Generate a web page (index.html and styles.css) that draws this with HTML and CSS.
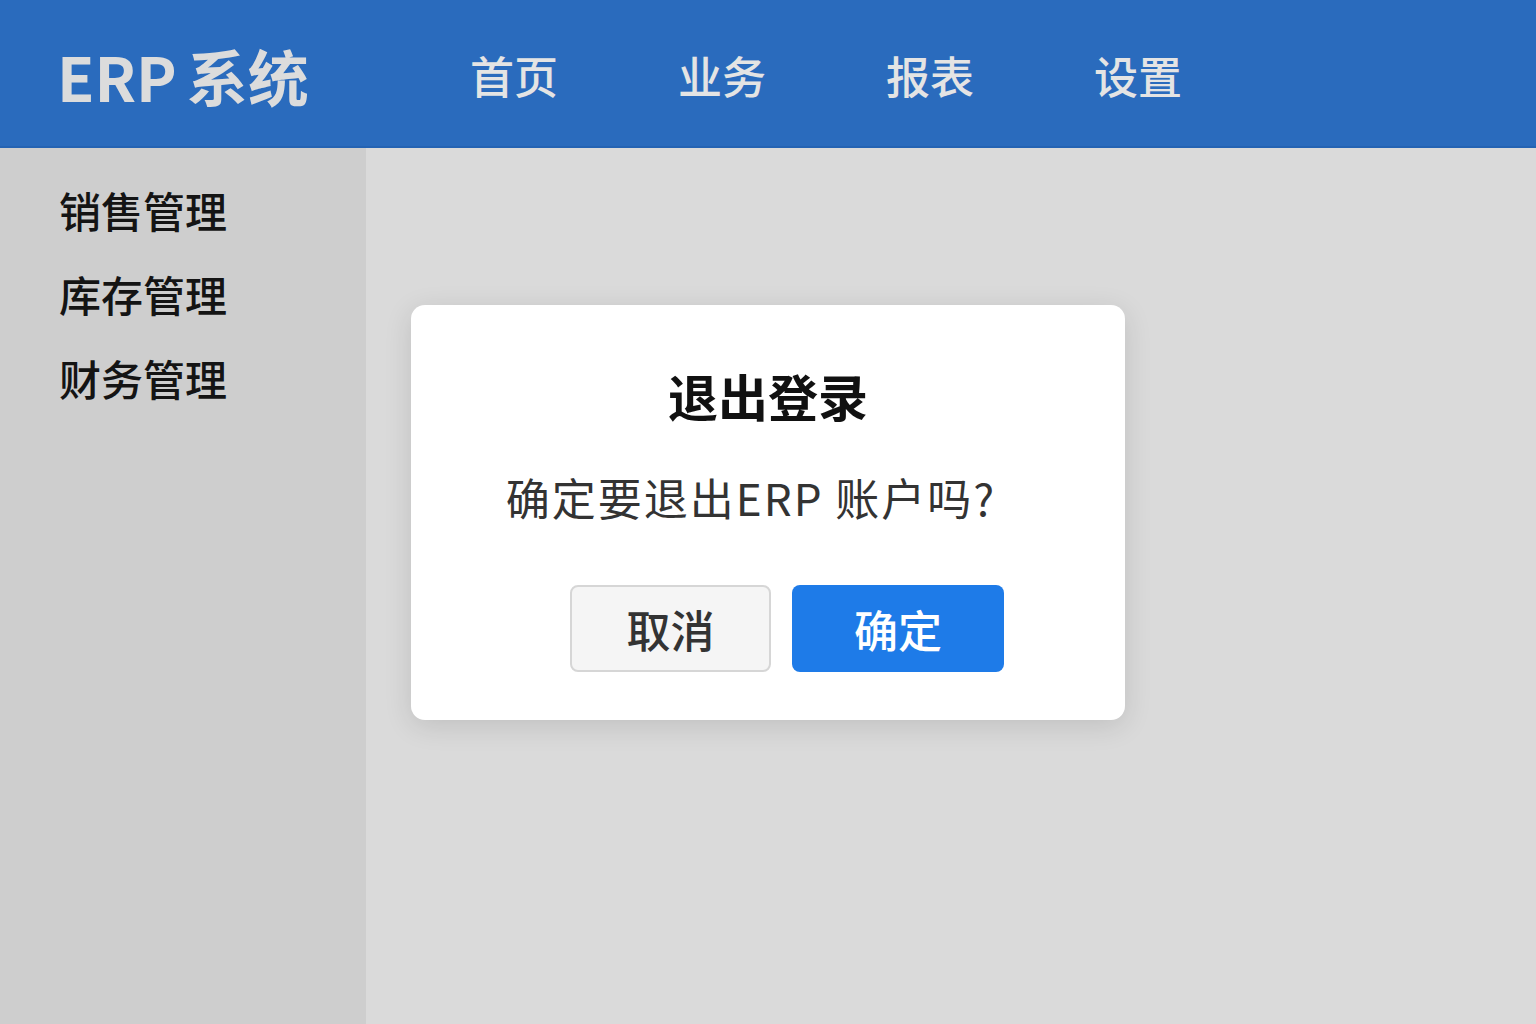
FILE: index.html
```html
<!DOCTYPE html>
<html lang="zh-CN">
<head>
    <meta charset="UTF-8">
    <meta name="viewport" content="width=device-width, initial-scale=1.0">
    <title>ERP系统 - 退出登录</title>
    <link rel="stylesheet" href="styles.css">
</head>
<body>
    <header class="topbar">
        <div class="brand">ERP 系统</div>
        <nav class="nav">
            <a href="#">首页</a>
            <a href="#">业务</a>
            <a href="#">报表</a>
            <a href="#">设置</a>
        </nav>
    </header>
    <div class="layout">
        <aside class="sidebar">
            <a href="#">销售管理</a>
            <a href="#">库存管理</a>
            <a href="#">财务管理</a>
        </aside>
        <main class="content">
            <div class="dialog">
                <h2 class="dialog-title">退出登录</h2>
                <p class="dialog-text">确定要退出ERP 账户吗?</p>
                <div class="dialog-actions">
                    <button class="btn btn-cancel">取消</button>
                    <button class="btn btn-ok">确定</button>
                </div>
            </div>
        </main>
    </div>
</body>
</html>
```

FILE: styles.css
```css
* {
    box-sizing: border-box;
}
html, body {
    height: 100%;
}
body {
    margin: 0;
    font-family: "Noto Sans CJK SC", "Noto Sans", sans-serif;
    display: flex;
    flex-direction: column;
    background-color: #dadada;
}
.topbar {
    height: 148px;
    flex-shrink: 0;
    display: flex;
    align-items: center;
    padding: 4px 0 0 57px;
    background-color: #2a6bbd;
    border-bottom: 2px solid #2463b3;
}
.brand {
    font-size: 61px;
    font-weight: 700;
    color: #dcdcdc;
    width: 413px;
    word-spacing: -4px;
}
.nav {
    display: flex;
    gap: 120px;
}
.nav a {
    font-size: 44px;
    font-weight: 500;
    color: #e4e4e4;
    text-decoration: none;
}
.layout {
    flex: 1;
    display: flex;
}
.sidebar {
    width: 366px;
    flex-shrink: 0;
    background-color: #cecece;
    display: flex;
    flex-direction: column;
    padding: 31px 0 0 59px;
    gap: 22px;
}
.sidebar a {
    font-size: 42px;
    font-weight: 500;
    line-height: 62px;
    color: #141414;
    text-decoration: none;
}
.content {
    flex: 1;
    padding: 157px 0 0 45px;
}
.dialog {
    width: 714px;
    height: 415px;
    background-color: #ffffff;
    border-radius: 14px;
    box-shadow: 0 6px 28px rgba(0, 0, 0, 0.12);
    display: flex;
    flex-direction: column;
    align-items: center;
    padding-top: 54px;
}
.dialog-title {
    margin: 0;
    font-size: 50px;
    font-weight: 700;
    line-height: 72px;
    color: #111111;
}
.dialog-text {
    margin: 36px 0 0;
    padding-right: 34px;
    font-size: 44px;
    line-height: 60px;
    letter-spacing: 2px;
    color: #333333;
}
.dialog-actions {
    display: flex;
    gap: 21px;
    margin-top: 58px;
    padding-left: 38px;
}
.btn {
    height: 87px;
    font-family: inherit;
    font-size: 44px;
    font-weight: 500;
    border-radius: 8px;
    cursor: pointer;
}
.btn-cancel {
    width: 201px;
    background-color: #f5f5f5;
    color: #333333;
    border: 2px solid #d6d6d6;
}
.btn-ok {
    width: 212px;
    background-color: #1e7be8;
    color: #ffffff;
    border: none;
}
```
